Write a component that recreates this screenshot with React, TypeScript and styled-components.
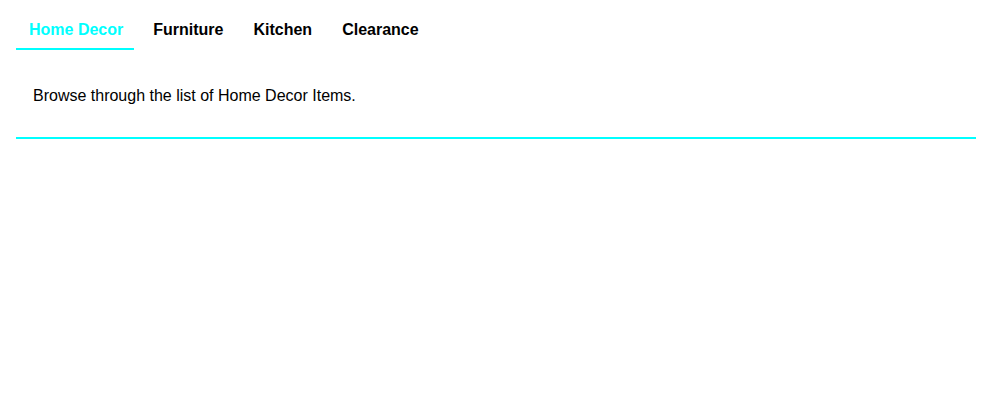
import React, { useState } from "react";
import styled, { createGlobalStyle } from "styled-components";

const Global = createGlobalStyle`
  html, body { margin: 0; padding: 0; background: #fff; }
  body { font-family: "Liberation Sans", Arial, sans-serif; }
`;

const Page = styled.div`
  padding: 8px 21px 0 16px;
`;

const TabBar = styled.div`
  display: flex;
  gap: 6px;
`;

const Tab = styled.button<{ $active: boolean }>`
  font-family: "Liberation Sans", Arial, sans-serif;
  font-size: 16px;
  font-weight: bold;
  line-height: 18px;
  padding: 13px 11px 9px 13px;
  background: none;
  border: none;
  border-bottom: 2px solid ${(p) => (p.$active ? "#00ffff" : "transparent")};
  color: ${(p) => (p.$active ? "#00ffff" : "#000")};
  cursor: pointer;
`;

const Panel = styled.div`
  padding: 37px 17px 32px;
  border-bottom: 2px solid #00ffff;
`;

const Text = styled.p`
  margin: 0;
  font-size: 16px;
  line-height: 18px;
  color: #000;
`;

const tabs = ["Home Decor", "Furniture", "Kitchen", "Clearance"];

export default function App() {
  const [active, setActive] = useState(0);
  return (
    <>
      <Global />
      <Page>
        <TabBar>
          {tabs.map((t, i) => (
            <Tab key={t} $active={i === active} onClick={() => setActive(i)}>
              {t}
            </Tab>
          ))}
        </TabBar>
        <Panel>
          <Text>Browse through the list of {tabs[active]} Items.</Text>
        </Panel>
      </Page>
    </>
  );
}
